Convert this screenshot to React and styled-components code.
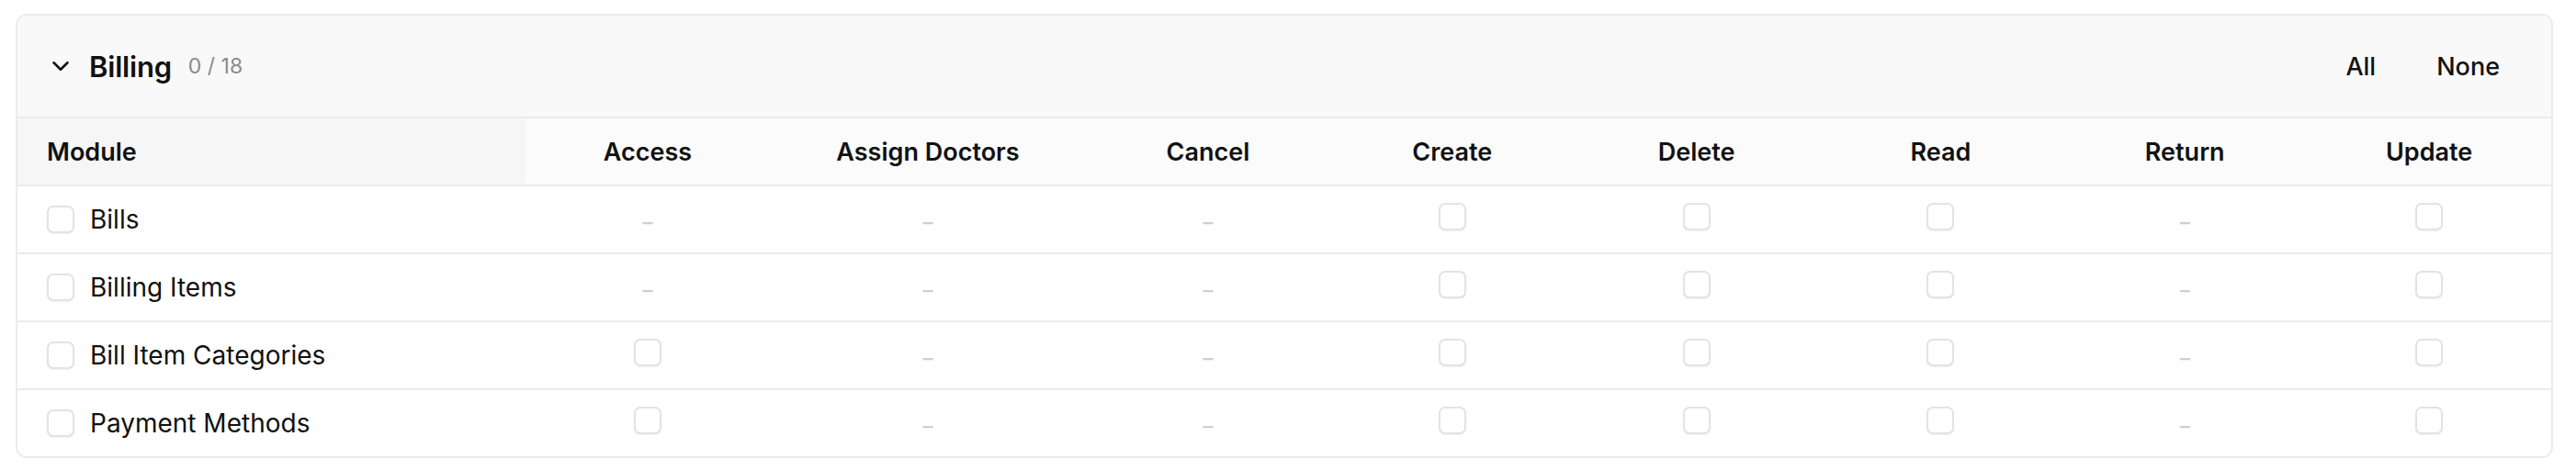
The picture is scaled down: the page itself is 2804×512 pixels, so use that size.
import React from 'react';
import styled, { createGlobalStyle } from 'styled-components';
import { ChevronDown } from 'lucide-react';

const GlobalStyle = createGlobalStyle`
  body {
    margin: 0;
    background: #ffffff;
    font-family: Inter, "Noto Sans", sans-serif;
    color: #111111;
  }
`;

const COLUMNS = ['Access', 'Assign Doctors', 'Cancel', 'Create', 'Delete', 'Read', 'Return', 'Update'];

const modules = [
  { name: 'Bills', perms: ['Create', 'Delete', 'Read', 'Update'] },
  { name: 'Billing Items', perms: ['Create', 'Delete', 'Read', 'Update'] },
  { name: 'Bill Item Categories', perms: ['Access', 'Create', 'Delete', 'Read', 'Update'] },
  { name: 'Payment Methods', perms: ['Access', 'Create', 'Delete', 'Read', 'Update'] },
];

const total = modules.reduce((sum, m) => sum + m.perms.length, 0);

const Page = styled.div`
  padding: 15px 25px 13px 17px;
`;

const Card = styled.section`
  border: 2px solid #ebebeb;
  border-radius: 12px;
  overflow: hidden;
  background: #ffffff;
`;

const SectionHeader = styled.header`
  display: flex;
  align-items: center;
  justify-content: space-between;
  height: 110px;
  padding: 0 32px;
  background: #f9f9f9;
  border-bottom: 2px solid #ebebeb;
`;

const TitleGroup = styled.div`
  display: flex;
  align-items: center;
`;

const Toggle = styled.span`
  display: flex;
  color: #111111;
  margin-right: 16px;
`;

const Title = styled.h2`
  margin: 0;
  font-size: 31px;
  font-weight: 600;
  letter-spacing: -0.2px;
`;

const Count = styled.span`
  margin-left: 18px;
  font-size: 23px;
  color: #8a8a8a;
`;

const Actions = styled.div`
  display: flex;
  gap: 18px;
`;

const GhostButton = styled.button`
  border: none;
  background: transparent;
  padding: 10px 24px;
  font-family: inherit;
  font-size: 27px;
  font-weight: 500;
  color: #111111;
  cursor: pointer;
`;

const Row = styled.div`
  display: grid;
  grid-template-columns: 553px 266px 344px repeat(6, 1fr);
  height: 72px;
  border-bottom: 2px solid #ebebeb;
  background: ${props => (props.head ? '#fbfbfb' : '#ffffff')};

  &:last-child {
    border-bottom: none;
  }
`;

const ModuleCell = styled.div`
  display: flex;
  align-items: center;
  gap: 17px;
  padding-left: 32px;
  font-size: ${props => (props.head ? '27px' : '28px')};
  font-weight: ${props => (props.head ? 600 : 400)};
  background: ${props => (props.head ? '#f6f6f6' : 'transparent')};
`;

const Cell = styled.div`
  display: flex;
  align-items: center;
  justify-content: center;
  font-size: 27px;
  font-weight: 600;
`;

const Checkbox = styled.span`
  display: inline-block;
  box-sizing: border-box;
  width: 30px;
  height: 30px;
  border: 2px solid #e3e3e3;
  border-radius: 7px;
  background: #ffffff;
  box-shadow: 0 1px 2px rgba(0, 0, 0, 0.06);
  margin-bottom: ${props => (props.cell ? '7px' : '0')};
`;

const Dash = styled.span`
  font-size: 22px;
  color: #cfcfcf;
  margin-top: 5px;
`;

const App = () => (
  <Page>
    <GlobalStyle />
    <Card>
      <SectionHeader>
        <TitleGroup>
          <Toggle>
            <ChevronDown size={30} strokeWidth={2} />
          </Toggle>
          <Title>Billing</Title>
          <Count>0 / {total}</Count>
        </TitleGroup>
        <Actions>
          <GhostButton>All</GhostButton>
          <GhostButton>None</GhostButton>
        </Actions>
      </SectionHeader>

      <div>
        <Row head>
          <ModuleCell head>Module</ModuleCell>
          {COLUMNS.map(col => (
            <Cell key={col}>{col}</Cell>
          ))}
        </Row>
        {modules.map(m => (
          <Row key={m.name}>
            <ModuleCell>
              <Checkbox role="checkbox" aria-checked="false" />
              {m.name}
            </ModuleCell>
            {COLUMNS.map(col => (
              <Cell key={col}>
                {m.perms.includes(col) ? (
                  <Checkbox cell role="checkbox" aria-checked="false" />
                ) : (
                  <Dash>–</Dash>
                )}
              </Cell>
            ))}
          </Row>
        ))}
      </div>
    </Card>
  </Page>
);

export default App;
